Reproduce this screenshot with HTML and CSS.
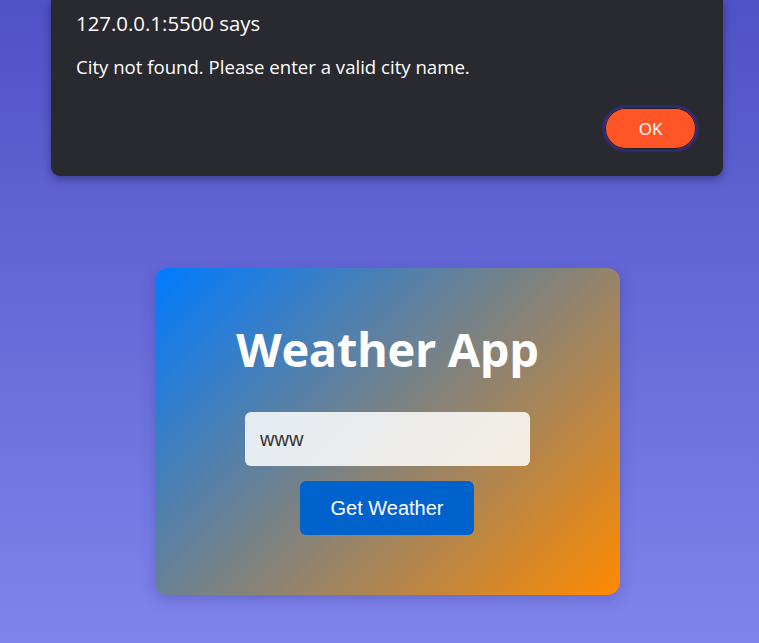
FILE: index.html
```html
<!DOCTYPE html>
<html lang="en">
<head>
<meta charset="utf-8">
<title>Weather App</title>
<link rel="stylesheet" href="styles.css">
</head>
<body>
<main class="page">
  <section class="card">
    <h1 class="title">Weather App</h1>
    <input class="city" type="text" value="www">
    <button class="get-btn" type="button">Get Weather</button>
  </section>
</main>
<div class="dialog" role="alertdialog">
  <div class="dialog-origin">127.0.0.1:5500 says</div>
  <div class="dialog-msg">City not found. Please enter a valid city name.</div>
  <div class="dialog-actions">
    <button class="ok-btn" type="button">OK</button>
  </div>
</div>
</body>
</html>
```
FILE: styles.css
```css
* { box-sizing: border-box; }
html, body { margin: 0; padding: 0; }
body {
  width: 759px;
  height: 643px;
  overflow: hidden;
  background: linear-gradient(180deg, #4f51c6 0%, #7f84eb 100%);
  font-family: "Liberation Sans", Arial, sans-serif;
  position: relative;
}
.page {
  display: flex;
  justify-content: center;
  padding: 268px 0 0 16px;
}
.card {
  width: 465px;
  height: 327px;
  border-radius: 13px;
  background: linear-gradient(135deg, #007bff 0%, #ff8a00 100%);
  box-shadow: 0 4px 14px rgba(40, 40, 120, 0.25);
  display: flex;
  flex-direction: column;
  align-items: center;
  padding-top: 54px;
}
.title {
  margin: 0;
  color: #fff;
  font-family: "Open Sans", sans-serif;
  font-weight: 700;
  font-size: 47px;
  line-height: 54px;
  letter-spacing: -0.35px;
}
.city {
  margin-top: 36px;
  width: 285px;
  height: 54px;
  border: 0;
  border-radius: 6px;
  background: rgba(255, 255, 255, 0.85);
  padding: 0 15px;
  font-family: "Liberation Sans", Arial, sans-serif;
  font-size: 20px;
  color: #333;
  outline: none;
}
.get-btn {
  margin-top: 15px;
  margin-left: -1px;
  width: 174px;
  height: 54px;
  border: 0;
  border-radius: 6px;
  background: #0062cc;
  color: #fff;
  font-family: "Liberation Sans", Arial, sans-serif;
  font-size: 20px;
}
.dialog {
  position: absolute;
  left: 51px;
  top: 0;
  width: 672px;
  height: 176px;
  background: #292a2f;
  border-radius: 0 0 9px 9px;
  box-shadow: 0 3px 8px rgba(0, 0, 0, 0.35);
  color: #fff;
  font-family: "Open Sans", sans-serif;
  padding: 8px 24px 0 25px;
}
.dialog-origin {
  font-size: 20.4px;
  line-height: 30px;
}
.dialog-msg {
  margin-top: 16px;
  font-size: 18.6px;
  line-height: 26px;
}
.dialog-actions {
  display: flex;
  justify-content: flex-end;
  margin-top: 25px;
}
.ok-btn {
  width: 97px;
  height: 47px;
  border-radius: 24px;
  border: 3px solid #2e2a6e;
  background: #ff5527;
  box-shadow: inset 0 0 0 1px #1e1e24;
  color: #fff;
  font-family: "Open Sans", sans-serif;
  font-size: 17px;
}
```
